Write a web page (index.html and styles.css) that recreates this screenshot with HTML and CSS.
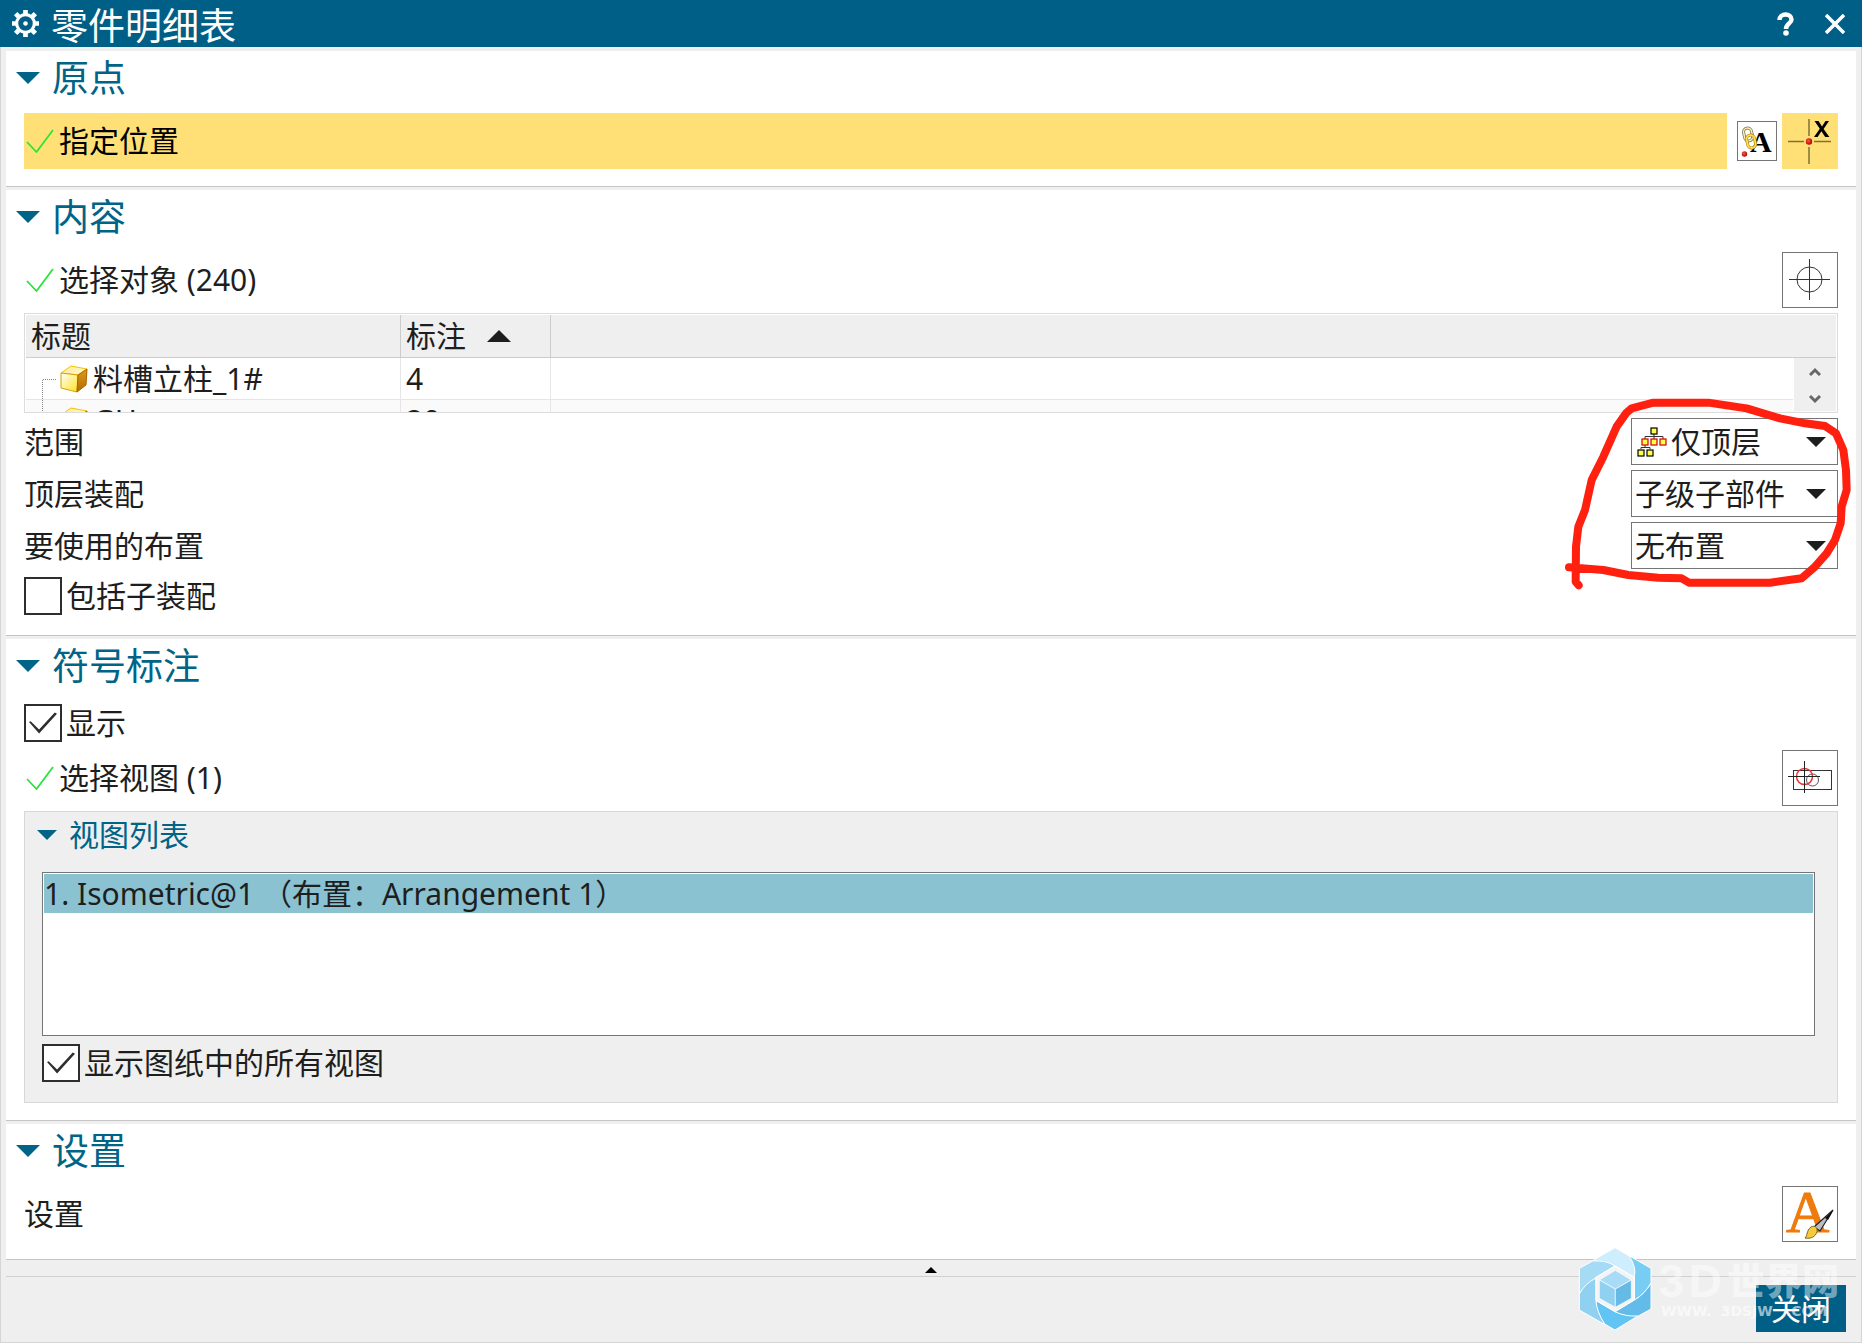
FILE: index.html
```html
<!DOCTYPE html>
<html lang="zh-CN">
<head>
<meta charset="utf-8">
<title>零件明细表</title>
<link rel="stylesheet" href="styles.css">
</head>
<body>
<svg class="defs" width="0" height="0" aria-hidden="true">
  <defs>
    <linearGradient id="cubeTop" x1="0" y1="0" x2="1" y2="1"><stop offset="0" stop-color="#ffe98a"/><stop offset="1" stop-color="#fffbe0"/></linearGradient>
    <linearGradient id="cubeFront" x1="0" y1="0" x2="1" y2="1"><stop offset="0" stop-color="#ffffff"/><stop offset="1" stop-color="#ffe21f"/></linearGradient>
    <linearGradient id="cubeSide" x1="0" y1="0" x2="0" y2="1"><stop offset="0" stop-color="#dc9a1c"/><stop offset="1" stop-color="#b56a00"/></linearGradient>
    <radialGradient id="redDot" cx=".4" cy=".4" r=".6"><stop offset="0" stop-color="#ff5a3c"/><stop offset="1" stop-color="#b80000"/></radialGradient>
    <symbol id="tick" viewBox="0 0 28 24"><path d="M1 13 L10.500 23 L27 1" fill="none" stroke="#2be43a" stroke-width="1.800"/></symbol>
    <symbol id="down" viewBox="0 0 24 12"><path d="M0 0H24L12 12Z"/></symbol>
    <symbol id="cube" viewBox="0 0 28 28">
      <path d="M1 8 L11 1 L27 4 L18 10Z" fill="url(#cubeTop)" stroke="#f5c400"/>
      <path d="M1 8 L18 10 L17 27 L1 23Z" fill="url(#cubeFront)" stroke="#d8a000"/>
      <path d="M18 10 L27 4 L26 20 L17 27Z" fill="url(#cubeSide)" stroke="#a86400"/>
    </symbol>
  </defs>
</svg>

<main class="dialog">
  <header class="titlebar">
    <svg class="gear" viewBox="0 0 26 26" aria-hidden="true">
      <circle cx="13" cy="13" r="8.500" fill="none" stroke="#fff" stroke-width="3"/>
      <circle cx="13" cy="13" r="2.200" fill="#fff"/>
      <g stroke="#fff" stroke-width="4.500"><path d="M13 0V4M13 22V26M0 13H4M22 13H26M3.500 3.500L6.500 6.500M19.500 19.500L22.500 22.500M3.500 22.500L6.500 19.500M19.500 6.500L22.500 3.500"/></g>
    </svg>
    <h1>零件明细表</h1>
    <button class="title-btn" aria-label="帮助"><svg width="18" height="24" viewBox="0 0 18 24"><path d="M2.500 8C2.500 0.800 14.500 0.800 14.500 7.500C14.500 11.500 9 11.500 9 17" fill="none" stroke="#fff" stroke-width="4.500"/><circle cx="9" cy="21" r="2.800" fill="#fff"/></svg></button>
    <button class="title-btn" aria-label="关闭窗口"><svg width="20" height="20" viewBox="0 0 20 20"><path d="M1 1L19 19M19 1L1 19" stroke="#fff" stroke-width="3.500"/></svg></button>
  </header>

  <section class="panel">
    <h2><svg class="caret"><use href="#down"/></svg>原点</h2>
    <div class="rows">
      <div class="row">
        <div class="pick active"><svg class="tick"><use href="#tick"/></svg>指定位置</div>
        <button class="tool small" aria-label="原点工具">
          <svg width="32" height="32" viewBox="0 0 32 32">
            <text x="9" y="27" class="glyph-a">A</text>
            <g fill="none"><rect x="3" y="3" width="8" height="13" rx="4" stroke="#77704a" stroke-width="3" transform="rotate(-12 7 9)"/><rect x="3" y="3" width="8" height="13" rx="4" stroke="#fff0b0" stroke-width="1.500" transform="rotate(-12 7 9)"/><rect x="6" y="10" width="8" height="13" rx="4" stroke="#a08018" stroke-width="3" transform="rotate(-12 10 16)"/><rect x="6" y="10" width="8" height="13" rx="4" stroke="#ffe04a" stroke-width="1.800" transform="rotate(-12 10 16)"/></g>
            <circle cx="3.500" cy="29" r="2.700" fill="url(#redDot)"/>
          </svg>
        </button>
        <button class="tool hot" aria-label="指定位置">
          <svg width="56" height="56" viewBox="0 0 56 56">
            <path d="M27 6V23M27 34V51M6 28.500H22M32 28.500H49" stroke="#7f7038" stroke-width="1.500"/>
            <circle cx="27" cy="28.500" r="3.200" fill="url(#redDot)"/>
            <path d="M32.500 8h4l3.500 5.600 3.500-5.600h3.500l-5.400 8 5.800 8h-4.200l-3.800-5.800-3.800 5.800h-3.600l5.800-8.200z"/>
          </svg>
        </button>
      </div>
    </div>
  </section>

  <section class="panel">
    <h2><svg class="caret"><use href="#down"/></svg>内容</h2>
    <div class="rows">
      <div class="row">
        <div class="pick"><svg class="tick"><use href="#tick"/></svg>选择对象 (240)</div>
        <button class="tool" aria-label="选择对象">
          <svg width="54" height="54" viewBox="0 0 54 54" fill="none" stroke="#333"><circle cx="26.500" cy="26.500" r="12.500"/><path d="M26.500 6V47M6 26.500H47"/></svg>
        </button>
      </div>
      <div class="grid-box">
        <table>
          <thead><tr><th class="c1">标题</th><th class="c2">标注 <svg class="sort" viewBox="0 0 24 12"><path d="M0 12H24L12 0Z"/></svg></th><th></th></tr></thead>
          <tbody>
            <tr><td><div class="node"><svg class="branch" viewBox="0 0 18 41"><path d="M3.500 41V21.500H18"/></svg><svg class="cube"><use href="#cube"/></svg>料槽立柱_1#</div></td><td>4</td><td></td></tr>
            <tr><td><div class="node"><svg class="branch" viewBox="0 0 18 41"><path d="M3.500 0V21.500H18"/></svg><svg class="cube"><use href="#cube"/></svg>GH</div></td><td>20</td><td></td></tr>
          </tbody>
        </table>
        <div class="scroller">
          <button aria-label="向上"><svg width="12" height="10" viewBox="0 0 12 10"><path d="M1 8L6 3L11 8"/></svg></button>
          <button aria-label="向下"><svg width="12" height="10" viewBox="0 0 12 10"><path d="M1 2L6 7L11 2"/></svg></button>
        </div>
      </div>
      <div class="field">
        <label for="scope">范围</label>
        <div class="combo with-icon">
          <select id="scope"><option>仅顶层</option></select>
          <svg class="tree" viewBox="0 0 30 30" aria-hidden="true">
            <path d="M17 7V10M8 12V9.500H26V12M17 9V12M8 17V21M4 22V20.500H13V22" fill="none" stroke="#333"/>
            <g fill="#ffff4a" stroke="#000" stroke-width="1.200"><rect x="14" y="1" width="6" height="6"/><rect x="1" y="23" width="6" height="6"/><rect x="10" y="23" width="6" height="6"/></g>
            <g fill="#ffff4a" stroke="#c00" stroke-width="1.200"><rect x="5" y="12" width="6" height="6"/><rect x="14" y="12" width="6" height="6"/><rect x="23" y="12" width="6" height="6"/></g>
          </svg>
          <svg class="drop"><use href="#down"/></svg>
        </div>
      </div>
      <div class="field">
        <label for="top">顶层装配</label>
        <div class="combo"><select id="top"><option>子级子部件</option></select><svg class="drop"><use href="#down"/></svg></div>
      </div>
      <div class="field">
        <label for="arr">要使用的布置</label>
        <div class="combo"><select id="arr"><option>无布置</option></select><svg class="drop"><use href="#down"/></svg></div>
      </div>
      <label class="check"><input type="checkbox">包括子装配</label>
    </div>
  </section>

  <section class="panel">
    <h2><svg class="caret"><use href="#down"/></svg>符号标注</h2>
    <div class="rows">
      <label class="check"><input type="checkbox" checked>显示</label>
      <div class="row">
        <div class="pick"><svg class="tick"><use href="#tick"/></svg>选择视图 (1)</div>
        <button class="tool" aria-label="选择视图">
          <svg width="54" height="54" viewBox="0 0 54 54" fill="none"><rect x="10.500" y="19.500" width="38" height="19" stroke="#333"/><circle cx="29.500" cy="29" r="6" stroke="#555"/><circle cx="21.500" cy="25.500" r="8" stroke="#f03030" stroke-width="1.500"/><path d="M21.500 10V42M5 25.500H37" stroke="#222"/></svg>
        </button>
      </div>
      <div class="sub">
        <h3><svg class="caret"><use href="#down"/></svg>视图列表</h3>
        <ul class="list"><li>1. Isometric@1 （布置：Arrangement 1）</li></ul>
        <label class="check"><input type="checkbox" checked>显示图纸中的所有视图</label>
      </div>
    </div>
  </section>

  <section class="panel">
    <h2><svg class="caret"><use href="#down"/></svg>设置</h2>
    <div class="rows">
      <div class="row">
        <div class="pick plain">设置</div>
        <button class="tool" aria-label="设置">
          <svg width="54" height="54" viewBox="0 0 54 54">
            <text x="3" y="45" class="glyph-big">A</text>
            <path d="M31 40L50 23L37 44Z" fill="#b9bcc4" stroke="#222" stroke-width="1.200"/>
            <path d="M50.500 23L42 31L45 33Z" fill="#111"/>
            <path d="M22 51C25 48 23 44 28 40C31 38 35 40 34 45C32 50 28 52 22 51Z" fill="#f5cb3c" stroke="#7a6420"/>
          </svg>
        </button>
      </div>
    </div>
  </section>

  <button class="collapse" aria-label="收起"><svg width="12" height="6" viewBox="0 0 12 6"><path d="M0 6H12L6 0Z"/></svg></button>
  <footer class="footer"><button class="close">关闭</button></footer>

  <svg class="mark" width="312" height="210" viewBox="0 0 936 630" aria-hidden="true">
    <path d="M57 532L160 540L235 555L325 563L395 565L417 578H660L755 565L795 530L830 490L855 450L872 400L875 350L890 300L888 240L880 180L858 130L825 108L765 100L690 85L590 55L475 38H310L245 55L228 70L200 110L160 200L125 270L105 360L85 410L78 470L77 575L86 586"/>
  </svg>

  <svg class="watermark" width="302" height="183" viewBox="0 0 906 549" aria-hidden="true">
    <g stroke="#fff" stroke-width="3" stroke-linejoin="round">
      <path d="M165 263L212 290Q235 335 222 352L165 318L92 306L118 290Z" fill="#cfeefd"/>
      <path d="M58 325L98 303Q140 300 165 318L108 352Q80 375 58 400Z" fill="#a5dbf5"/>
      <path d="M58 402Q75 370 108 354V420Q112 455 135 494L58 450Z" fill="#90d1f2"/>
      <path d="M108 422L165 455Q200 468 235 467L165 510L134 492Q110 455 108 422Z" fill="#62c4f2"/>
      <path d="M165 455L223 420Q255 400 273 370V447L235 468Q195 470 165 455Z" fill="#62bbe8"/>
      <path d="M207 287L273 325V368Q255 402 223 420V352Q230 320 207 287Z" fill="#78cdf4"/>
      <path d="M165 318L223 352V420L165 455L108 420V352Z" fill="#f4f4f4"/>
      <path d="M166 331L214 360L166 387L118 360Z" fill="#a8dcf6" stroke-width="2"/>
      <path d="M118 360L166 387V442L118 415Z" fill="#90d1f2" stroke-width="2"/>
      <path d="M214 360L166 387V442L214 415Z" fill="#66bbe6" stroke-width="2"/>
    </g>
    <g fill="#fff" fill-opacity=".45">
      <text x="296" y="410" class="wm-latin">3</text><text x="386" y="410" class="wm-latin">D</text>
      <text x="502" y="404" class="wm-cjk">世界网</text>
    </g>
    <g fill="#fff" fill-opacity=".6" class="wm-url"><text x="303" y="468">WWW.</text><text x="482" y="468">3DSJW</text><text x="678" y="468">.COM</text></g>
  </svg>
</main>
</body>
</html>
```
FILE: styles.css
```css
* { box-sizing: border-box; }
body {
  margin: 0;
  background: #efefef;
  color: #1e1e1e;
  font: 30px/44px "Noto Sans", "Noto Sans CJK SC", sans-serif;
}
h1, h2, h3, ul { margin: 0; padding: 0; font-weight: 400; }
button, select, input { margin: 0; padding: 0; font: inherit; color: inherit; }
svg { display: block; flex: none; }
.defs { position: absolute; }

.dialog {
  position: relative;
  display: flex;
  flex-direction: column;
  min-height: 100vh;
  border: 1px solid #d5d5d5;
  border-top: 0;
}

.titlebar {
  display: flex;
  align-items: center;
  gap: 30px;
  height: 47px;
  margin: 0 -1px;
  padding: 0 17px 0 12px;
  background: #005f87;
  color: #fff;
}
.gear { width: 27px; height: 27px; }
.titlebar h1 { flex: 1; margin-left: -18px; padding-top: 4px; font-size: 37px; line-height: 43px; }
.title-btn { display: flex; border: 0; background: none; }

.panel {
  margin: 4px 5px 0;
  padding: 0 18px 17px;
  background: #fff;
  border-bottom: 1px solid #c4c4c4;
}
.panel + .panel { margin-top: 3px; }
.panel h2 {
  display: flex;
  align-items: center;
  gap: 12px;
  margin-left: -8px;
  padding-bottom: 9px;
  color: #006487;
  font-size: 37px;
  line-height: 53px;
}
.caret { width: 24px; height: 12px; fill: #006487; }
.rows { display: flex; flex-direction: column; gap: 5px; }

.row { display: flex; align-items: center; gap: 5px; height: 56px; }
.pick { display: flex; flex: 1; align-items: center; gap: 5px; height: 56px; margin-right: 5px; padding-left: 2px; }
.pick.active { background: #ffe076; color: #000; }
.pick.plain { padding-left: 0; }
.tick { width: 28px; height: 24px; }

.tool { display: flex; align-items: center; justify-content: center; width: 56px; height: 56px; border: 1px solid #757575; background: #fff; }
.tool.small { width: 40px; height: 40px; }
.tool.hot { border: 0; background: #ffe076; }
.glyph-a { font: bold 30px "Liberation Serif", serif; fill: #000; }
.glyph-big { font: 60px "Liberation Serif", serif; fill: #ee7b0c; stroke: #ee7b0c; }

.grid-box { position: relative; height: 100px; overflow: hidden; border: 1px solid #dcdcdc; padding: 1px; }
table { width: 100%; border-collapse: separate; border-spacing: 0; table-layout: fixed; }
th, td { padding: 0 5px; text-align: left; font-weight: 400; line-height: 41px; border-right: 1px solid #e6e6e6; border-bottom: 1px solid #e6e6e6; }
th { background: #efefef; line-height: 42px; border-color: #ccc; }
th:last-child, td:last-child { border-right: 0; }
tbody tr:nth-child(2) { background: #fafafa; }
.c1 { width: 375px; }
.c2 { width: 150px; }
.sort { display: inline-block; width: 24px; height: 12px; margin-left: 13px; vertical-align: 5px; fill: #1e1e1e; }
.node { display: flex; align-items: center; gap: 5px; height: 41px; padding-left: 8px; }
.branch { width: 18px; height: 41px; fill: none; stroke: #888; stroke-dasharray: 1 1; margin-right: -2px; }
.cube { width: 28px; height: 28px; }
.scroller { position: absolute; top: 44px; right: 1px; bottom: 1px; width: 43px; display: flex; flex-direction: column; border-left: 1px solid #fff; background: #efefef; }
.scroller button { display: flex; flex: 1; align-items: center; justify-content: center; padding-top: 2px; border: 0; background: none; }
.scroller path { fill: none; stroke: #666; stroke-width: 3; }

.field { display: flex; align-items: center; justify-content: space-between; height: 47px; }
.combo { display: grid; align-items: center; width: 207px; }
.combo > * { grid-area: 1 / 1; }
.combo select { width: 100%; height: 47px; padding-left: 3px; border: 1px solid #757575; border-radius: 0; background: #fff; appearance: none; }
.combo.with-icon select { padding-left: 39px; }
.tree { width: 30px; height: 30px; margin-left: 6px; pointer-events: none; }
.drop { justify-self: end; width: 20px; height: 10px; margin-right: 12px; fill: #1e1e1e; pointer-events: none; }

.check { display: flex; align-items: center; gap: 4px; height: 44px; }
.check input { appearance: none; display: grid; place-items: center; width: 38px; height: 38px; border: 2px solid #2e2e2e; background: #fff; }
.check input:checked::after { content: ""; width: 28px; height: 22px; background: #2e2e2e; clip-path: polygon(0 46%, 6% 42%, 36% 80%, 92% 2%, 100% 8%, 36% 98%); }

.sub { padding: 0 22px 17px 17px; background: #efefef; border: 1px solid #d8d8d8; }
.sub h3 { display: flex; align-items: center; gap: 12px; margin-left: -5px; padding-bottom: 14px; color: #006487; font-size: 30px; line-height: 46px; }
.sub h3 .caret { width: 20px; height: 10px; }
.sub .check { margin-top: 5px; }
.list { height: 164px; padding: 1px; border: 1px solid #757575; background: #fff; list-style: none; }
.list li { background: #8ac2d2; line-height: 39px; }

.collapse { display: flex; align-items: center; justify-content: center; height: 17px; margin: 0 5px; padding-top: 4px; border: 0; border-bottom: 1px solid #d0d0d0; background: none; }
.footer { display: flex; justify-content: flex-end; padding: 8px 15px 10px; }
.close { width: 90px; height: 47px; border: 0; background: #005f87; color: #fff; }

.mark { position: absolute; top: 390px; right: -1px; pointer-events: none; }
.mark path { fill: none; stroke: #ff2010; stroke-width: 24; stroke-linecap: round; stroke-linejoin: round; }
.watermark { position: absolute; right: -1px; bottom: -1px; pointer-events: none; }
.wm-latin { font: bold 138px "Liberation Sans", sans-serif; }
.wm-cjk { font: 900 112px "Noto Sans CJK SC", sans-serif; }
.wm-url { font: bold 42px "DejaVu Sans", sans-serif; }
```
